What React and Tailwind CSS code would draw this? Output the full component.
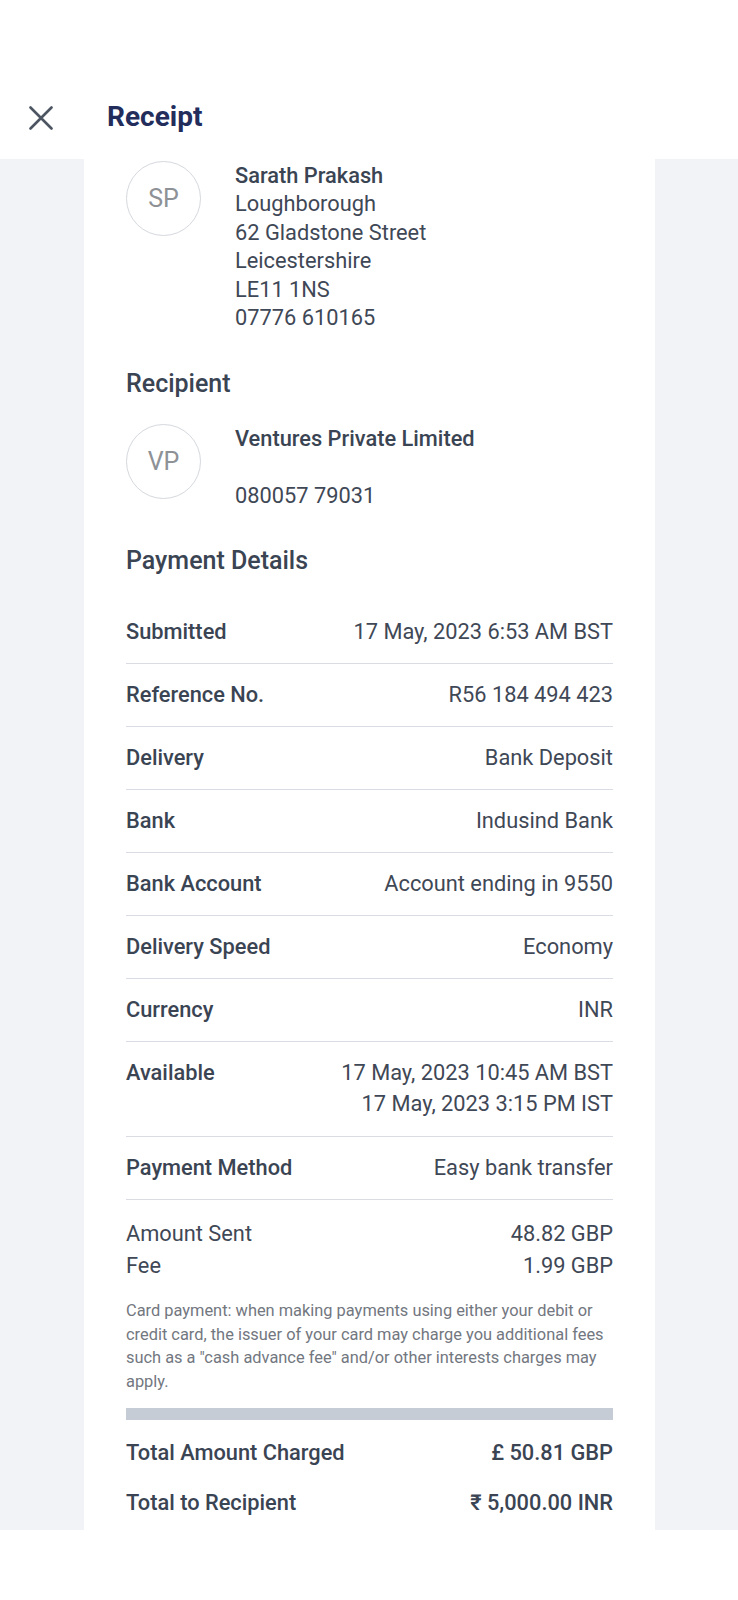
const FONT = { fontFamily: "Roboto, 'Noto Sans', sans-serif" };

const ROWS = [
  { label: "Submitted", value: ["17 May, 2023 6:53 AM BST"] },
  { label: "Reference No.", value: ["R56 184 494 423"] },
  { label: "Delivery", value: ["Bank Deposit"] },
  { label: "Bank", value: ["Indusind Bank"] },
  { label: "Bank Account", value: ["Account ending in 9550"] },
  { label: "Delivery Speed", value: ["Economy"] },
  { label: "Currency", value: ["INR"] },
  { label: "Available", value: ["17 May, 2023 10:45 AM BST", "17 May, 2023 3:15 PM IST"] },
  { label: "Payment Method", value: ["Easy bank transfer"] },
];

function Avatar({ initials }) {
  return (
    <div className="w-[75px] h-[75px] shrink-0 rounded-full border border-[#d5d8dd] flex items-center justify-center text-[25px] text-[#8e9196]">
      {initials}
    </div>
  );
}

function DetailRow({ label, value }) {
  const multi = value.length > 1;
  return (
    <div
      className={`flex justify-between border-b border-[#d9dde3] text-[21.8px] ${
        multi ? "pt-[15.5px] pb-[16.5px] leading-[31px]" : "py-[17px] leading-[28px]"
      }`}
    >
      <span className="font-medium text-[#3a4453]">{label}</span>
      <div className="text-right text-[#3f4856]">
        {value.map((v) => (
          <div key={v}>{v}</div>
        ))}
      </div>
    </div>
  );
}

export default function App() {
  return (
    <div className="w-[738px] min-h-[1600px] bg-white" style={FONT}>
      <div className="h-[159px] flex items-end pb-[29px]">
        <svg width="24" height="24" viewBox="0 0 24 24" className="ml-[29px]">
          <path d="M1.5 1.5 L22.5 22.5 M22.5 1.5 L1.5 22.5" stroke="#4d5562" strokeWidth="2.6" strokeLinecap="round" />
        </svg>
        <h1 className="ml-[54px] text-[28px] leading-[32px] font-bold text-[#222d5c] -mb-[3px]">Receipt</h1>
      </div>

      <div className="bg-[#f1f3f7] pl-[84px] pr-[83px]">
        <div className="bg-white px-[42px] pb-[13px] text-[#3f4856]">
          <div className="flex gap-[34px] pt-[2px]">
            <Avatar initials="SP" />
            <div className="text-[21.8px] leading-[28.4px] pt-[1px]">
              <div className="font-medium text-[#3a4453]">Sarath Prakash</div>
              <div>Loughborough</div>
              <div>62 Gladstone Street</div>
              <div>Leicestershire</div>
              <div>LE11 1NS</div>
              <div>07776 610165</div>
            </div>
          </div>

          <h2 className="mt-[36px] text-[25px] leading-[32px] font-medium text-[#3a4453]">Recipient</h2>
          <div className="flex gap-[34px] mt-[24px]">
            <Avatar initials="VP" />
            <div className="text-[21.8px] leading-[28.5px] pt-[1px]">
              <div className="font-medium text-[#3a4453]">Ventures Private Limited</div>
              <div>&nbsp;</div>
              <div>080057 79031</div>
            </div>
          </div>

          <h2 className="mt-[34px] text-[25px] leading-[32px] font-medium text-[#3a4453]">Payment Details</h2>
          <div className="mt-[24px]">
            {ROWS.map((r) => (
              <DetailRow key={r.label} label={r.label} value={r.value} />
            ))}
          </div>

          <div className="pt-[18px] text-[21.8px] leading-[32px] text-[#3f4856]">
            <div className="flex justify-between">
              <span>Amount Sent</span>
              <span>48.82 GBP</span>
            </div>
            <div className="flex justify-between">
              <span>Fee</span>
              <span>1.99 GBP</span>
            </div>
          </div>

          <p className="mt-[17px] text-[16.4px] leading-[23.7px] text-[#727780]">
            Card payment: when making payments using either your debit or credit card, the issuer of your card may charge you additional fees such as a "cash advance fee" and/or other interests charges may apply.
          </p>

          <div className="mt-[14px] h-[12px] bg-[#c5ccd5]" />

          <div className="text-[21.8px] font-medium text-[#3a4453]">
            <div className="flex justify-between leading-[28px] pt-[19px]">
              <span>Total Amount Charged</span>
              <span>£ 50.81 GBP</span>
            </div>
            <div className="flex justify-between leading-[28px] pt-[22px]">
              <span>Total to Recipient</span>
              <span>₹ 5,000.00 INR</span>
            </div>
          </div>
        </div>
      </div>
    </div>
  );
}
